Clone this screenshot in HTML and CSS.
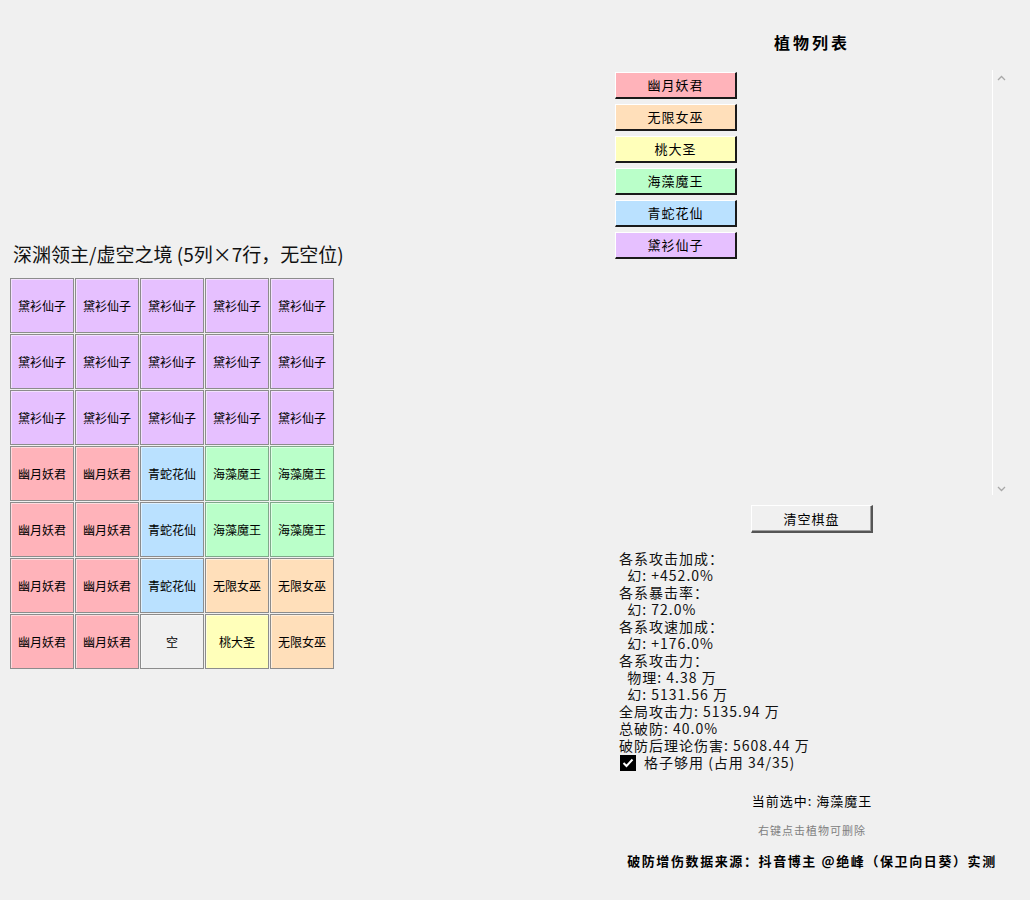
FILE: index.html
```html
<!DOCTYPE html>
<html lang="zh">
<head>
	<meta charset="UTF-8">
	<title>植物布阵</title>
	<link rel="stylesheet" href="styles.css">
</head>
<body>
	<div class="app">
		<div class="board">
			<div class="board-title">深渊领主/虚空之境 (5列×7行，无空位)</div>
			<div class="grid">
				<div class="cell c-purple">黛衫仙子</div>
				<div class="cell c-purple">黛衫仙子</div>
				<div class="cell c-purple">黛衫仙子</div>
				<div class="cell c-purple">黛衫仙子</div>
				<div class="cell c-purple">黛衫仙子</div>

				<div class="cell c-purple">黛衫仙子</div>
				<div class="cell c-purple">黛衫仙子</div>
				<div class="cell c-purple">黛衫仙子</div>
				<div class="cell c-purple">黛衫仙子</div>
				<div class="cell c-purple">黛衫仙子</div>

				<div class="cell c-purple">黛衫仙子</div>
				<div class="cell c-purple">黛衫仙子</div>
				<div class="cell c-purple">黛衫仙子</div>
				<div class="cell c-purple">黛衫仙子</div>
				<div class="cell c-purple">黛衫仙子</div>

				<div class="cell c-pink">幽月妖君</div>
				<div class="cell c-pink">幽月妖君</div>
				<div class="cell c-blue">青蛇花仙</div>
				<div class="cell c-green">海藻魔王</div>
				<div class="cell c-green">海藻魔王</div>

				<div class="cell c-pink">幽月妖君</div>
				<div class="cell c-pink">幽月妖君</div>
				<div class="cell c-blue">青蛇花仙</div>
				<div class="cell c-green">海藻魔王</div>
				<div class="cell c-green">海藻魔王</div>

				<div class="cell c-pink">幽月妖君</div>
				<div class="cell c-pink">幽月妖君</div>
				<div class="cell c-blue">青蛇花仙</div>
				<div class="cell c-peach">无限女巫</div>
				<div class="cell c-peach">无限女巫</div>

				<div class="cell c-pink">幽月妖君</div>
				<div class="cell c-pink">幽月妖君</div>
				<div class="cell c-empty">空</div>
				<div class="cell c-yellow">桃大圣</div>
				<div class="cell c-peach">无限女巫</div>
			</div>
		</div>

		<div class="side">
			<div class="side-title">植物列表</div>
			<div class="plant-box">
				<div class="plant-list">
					<div class="plant c-pink">幽月妖君</div>
					<div class="plant c-peach">无限女巫</div>
					<div class="plant c-yellow">桃大圣</div>
					<div class="plant c-green">海藻魔王</div>
					<div class="plant c-blue">青蛇花仙</div>
					<div class="plant c-purple">黛衫仙子</div>
				</div>
				<div class="scrollbar">
					<svg width="9" height="6" viewBox="0 0 9 6"><path d="M1 5 L4.5 1.5 L8 5" fill="none" stroke="#a8a8a8" stroke-width="1.3"/></svg>
					<svg width="9" height="6" viewBox="0 0 9 6"><path d="M1 1 L4.5 4.5 L8 1" fill="none" stroke="#a8a8a8" stroke-width="1.3"/></svg>
				</div>
			</div>

			<div class="clear-row">
				<div class="clear-btn">清空棋盘</div>
			</div>

			<div class="stats">
				<div>各系攻击加成：</div>
				<div>&nbsp;&nbsp;幻: +452.0%</div>
				<div>各系暴击率：</div>
				<div>&nbsp;&nbsp;幻: 72.0%</div>
				<div>各系攻速加成：</div>
				<div>&nbsp;&nbsp;幻: +176.0%</div>
				<div>各系攻击力：</div>
				<div>&nbsp;&nbsp;物理: 4.38 万</div>
				<div>&nbsp;&nbsp;幻: 5131.56 万</div>
				<div>全局攻击力: 5135.94 万</div>
				<div>总破防: 40.0%</div>
				<div>破防后理论伤害: 5608.44 万</div>
				<div class="check-row">
					<span class="check"><svg width="12" height="10" viewBox="0 0 12 10"><path d="M1.5 5 L4.5 8 L10.5 1.5" fill="none" stroke="#fff" stroke-width="2"/></svg></span>
					<span>格子够用 (占用 34/35)</span>
				</div>
			</div>

			<div class="current">当前选中: 海藻魔王</div>
			<div class="hint">右键点击植物可删除</div>
			<div class="source">破防增伤数据来源：抖音博主 @绝峰（保卫向日葵）实测</div>
		</div>
	</div>
</body>
</html>
```

FILE: styles.css
```css
body{
	margin: 0;
	background: #f0f0f0;
	font-family: "Noto Sans CJK SC", "Liberation Sans", sans-serif;
	color: #000;
}

.app{
	display: flex;
	height: 900px;
	width: 1030px;
	overflow: hidden;
}

/* 左侧棋盘 */
.board{
	width: 612px;
	flex-shrink: 0;
	display: flex;
	flex-direction: column;
	justify-content: center;
	padding-left: 10px;
	padding-top: 9px;
	box-sizing: border-box;
}

.board-title{
	font-size: 19px;
	line-height: 26px;
	padding-left: 3px;
	margin-bottom: 11px;
	color: #111;
}

.grid{
	display: grid;
	grid-template-columns: repeat(5, 64px);
	grid-auto-rows: 55px;
	gap: 1px;
}

.cell{
	border: 1px solid #8c8c8c;
	box-shadow: inset 1px 1px 0 rgba(255,255,255,.5);
	display: flex;
	align-items: center;
	justify-content: center;
	font-size: 12px;
	box-sizing: border-box;
}

.c-pink{ background: #ffb3ba; }
.c-peach{ background: #ffdfba; }
.c-yellow{ background: #ffffba; }
.c-green{ background: #baffc9; }
.c-blue{ background: #bae1ff; }
.c-purple{ background: #e6c0ff; }
.c-empty{ background: #f0f0f0; }

.grid .c-green{ border-color: #7fa88a; }

/* 右侧面板 */
.side{
	width: 400px;
	flex-shrink: 0;
	display: flex;
	flex-direction: column;
	padding-top: 31px;
}

.side-title{
	text-align: center;
	font-weight: bold;
	font-size: 16px;
	letter-spacing: 3px;
	line-height: 22px;
	height: 22px;
	margin-bottom: 17px;
}

.plant-box{
	display: flex;
	height: 425px;
	flex-shrink: 0;
}

.plant-list{
	flex: 1;
	display: flex;
	flex-direction: column;
	gap: 5px;
	padding: 2px 0 0 3px;
}

.plant{
	width: 122px;
	height: 27px;
	box-sizing: border-box;
	border-top: 1px solid #fff;
	border-left: 1px solid #fff;
	border-right: 2px solid #1a1a1a;
	border-bottom: 2px solid #1a1a1a;
	font-size: 13px;
	letter-spacing: 1px;
	text-align: center;
	line-height: 24px;
}

.scrollbar{
	width: 16px;
	margin-right: 3px;
	border-left: 1px solid #fff;
	display: flex;
	flex-direction: column;
	justify-content: space-between;
	align-items: center;
	padding: 5px 0 3px;
}

.clear-row{
	display: flex;
	justify-content: center;
	margin-top: 10px;
}

.clear-btn{
	width: 122px;
	height: 28px;
	box-sizing: border-box;
	background: #f0f0f0;
	border-top: 1px solid #fff;
	border-left: 1px solid #fff;
	border-right: 2px solid #555;
	border-bottom: 2px solid #555;
	box-shadow: inset -1px -1px 0 #a0a0a0;
	text-align: center;
	font-size: 13px;
	letter-spacing: 1px;
	line-height: 25px;
}

.stats{
	margin-top: 17px;
	padding-left: 7px;
	font-size: 14px;
	letter-spacing: 1px;
	line-height: 17px;
	color: #111;
}

.check-row{
	display: flex;
	align-items: center;
	gap: 8px;
	padding-left: 1px;
}

.check{
	width: 16px;
	height: 16px;
	background: #000;
	display: flex;
	align-items: center;
	justify-content: center;
}

.current{
	text-align: center;
	font-size: 13px;
	letter-spacing: 1px;
	margin-top: 21px;
	line-height: 18px;
}

.hint{
	text-align: center;
	font-size: 11px;
	letter-spacing: 1px;
	color: #808080;
	margin-top: 12px;
	line-height: 16px;
}

.source{
	text-align: center;
	font-size: 13px;
	font-weight: bold;
	letter-spacing: 1.6px;
	margin-top: 14px;
	line-height: 18px;
}
```
